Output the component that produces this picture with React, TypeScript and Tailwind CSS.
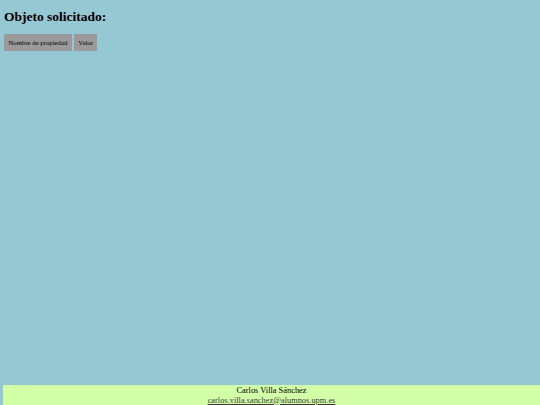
import React from "react";

const headers = ["Nombre de propiedad", "Valor"];

const App = () => {
  return (
    <div className="flex h-[405px] flex-col overflow-hidden bg-[#96c8d4] font-['Liberation_Serif',serif] text-black">
      <h2 className="ml-[4px] mt-[8px] text-[13.5px] font-bold leading-[18px]">
        Objeto solicitado:
      </h2>
      <table className="ml-[2px] mt-[6px] w-fit border-separate border-spacing-x-[2px] border-spacing-y-[2px]">
        <thead>
          <tr>
            {headers.map((h) => (
              <th
                key={h}
                className="bg-[#9a9a9a] px-[4.5px] py-[4.5px] text-left text-[6.75px] font-normal leading-[8px]"
              >
                {h}
              </th>
            ))}
          </tr>
        </thead>
        <tbody></tbody>
      </table>
      <footer className="ml-[3px] mt-auto flex h-[20px] flex-col items-center bg-[#d2ffa8] pt-[1px] text-[8.4px] leading-[9.5px]">
        <span className="text-black">Carlos Villa Sánchez</span>
        <a className="text-[#3a3a3a] underline" href="#">
          carlos.villa.sanchez@alumnos.upm.es
        </a>
      </footer>
    </div>
  );
};

export default App;
